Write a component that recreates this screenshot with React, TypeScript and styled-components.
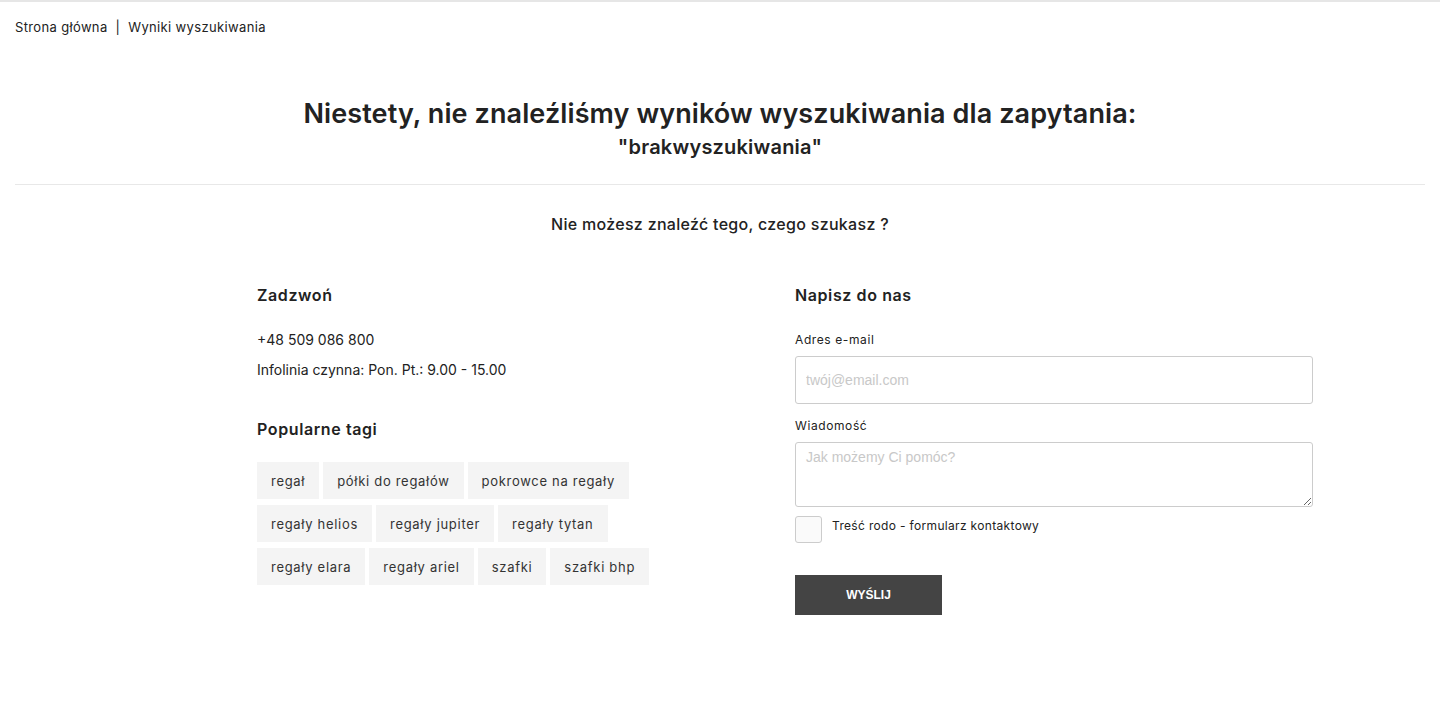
import styled, { createGlobalStyle } from "styled-components";

const GlobalStyle = createGlobalStyle`
  html, body {
    margin: 0;
    padding: 0;
    background: #fff;
  }
  body {
    font-family: Inter, "Noto Sans", sans-serif;
    color: #222;
  }
  * {
    box-sizing: border-box;
  }
`;

const tagRows = [
  ["regał", "półki do regałów", "pokrowce na regały"],
  ["regały helios", "regały jupiter", "regały tytan"],
  ["regały elara", "regały ariel", "szafki", "szafki bhp"],
];

function App() {
  return (
    <Page>
      <GlobalStyle />
      <Breadcrumbs>
        <a href="#">Strona główna</a>
        <Sep>|</Sep>
        <span>Wyniki wyszukiwania</span>
      </Breadcrumbs>

      <Hero>
        <Title>Niestety, nie znaleźliśmy wyników wyszukiwania dla zapytania:</Title>
        <Query>"brakwyszukiwania"</Query>
      </Hero>

      <Lead>Nie możesz znaleźć tego, czego szukasz ?</Lead>

      <Columns>
        <Column>
          <H3>Zadzwoń</H3>
          <InfoLine>+48 509 086 800</InfoLine>
          <InfoLine>Infolinia czynna: Pon. Pt.: 9.00 - 15.00</InfoLine>

          <H3 $top={32} $bottom={21}>
            Popularne tagi
          </H3>
          <Tags>
            {tagRows.map((row, i) => (
              <TagRow key={i}>
                {row.map((t) => (
                  <Tag key={t} href="#">
                    {t}
                  </Tag>
                ))}
              </TagRow>
            ))}
          </Tags>
        </Column>

        <Column>
          <H3>Napisz do nas</H3>
          <Form onSubmit={(e) => e.preventDefault()}>
            <Label>Adres e-mail</Label>
            <Input type="email" placeholder="twój@email.com" />
            <Label>Wiadomość</Label>
            <Textarea placeholder="Jak możemy Ci pomóc?" />
            <Consent>
              <Check type="checkbox" />
              <span>Treść rodo - formularz kontaktowy</span>
            </Consent>
            <Button type="submit">WYŚLIJ</Button>
          </Form>
        </Column>
      </Columns>
    </Page>
  );
}

const Page = styled.div`
  border-top: 2px solid #e6e6e6;
  padding: 0 15px 60px;
`;

const Breadcrumbs = styled.nav`
  display: flex;
  align-items: center;
  height: 50px;
  font-size: 13px;
  letter-spacing: 0.35px;
  color: #222;

  a {
    color: #222;
    text-decoration: none;
  }
`;

const Sep = styled.span`
  margin: 0 8px;
`;

const Hero = styled.div`
  text-align: center;
  padding: 43px 0 22px;
  border-bottom: 1px solid #e8e8e8;
`;

const Title = styled.h1`
  margin: 0;
  font-size: 27px;
  font-weight: 600;
  line-height: 38px;
  letter-spacing: 0.1px;
  color: #222;
`;

const Query = styled.div`
  margin-top: -1px;
  font-size: 20px;
  font-weight: 600;
  line-height: 30px;
  letter-spacing: 0.2px;
  color: #222;
`;

const Lead = styled.p`
  margin: 29px 0 0;
  text-align: center;
  font-size: 16px;
  font-weight: 500;
  letter-spacing: 0.3px;
  color: #222;
`;

const Columns = styled.div`
  display: grid;
  grid-template-columns: 538px 538px;
  padding-left: 242px;
  margin-top: 49px;
`;

const Column = styled.div`
  display: flex;
  flex-direction: column;
  align-items: flex-start;
`;

const H3 = styled.h3<{ $top?: number; $bottom?: number }>`
  margin: ${(p) => p.$top ?? 0}px 0 ${(p) => p.$bottom ?? 18}px;
  font-size: 16px;
  font-weight: 600;
  line-height: 24px;
  letter-spacing: 0.6px;
  color: #222;
`;

const InfoLine = styled.div`
  font-size: 14px;
  line-height: 30px;
  color: #222;
`;

const Tags = styled.div`
  display: flex;
  flex-direction: column;
  gap: 6px;
`;

const TagRow = styled.div`
  display: flex;
  gap: 4px;
`;

const Tag = styled.a`
  display: inline-flex;
  align-items: center;
  height: 37px;
  padding: 0 14px;
  background: #f4f4f4;
  font-size: 13px;
  letter-spacing: 0.7px;
  color: #333;
  text-decoration: none;
`;

const Form = styled.form`
  display: flex;
  flex-direction: column;
  width: 518px;
  padding-top: 6px;
`;

const Label = styled.label`
  font-size: 12px;
  line-height: 18px;
  letter-spacing: 0.6px;
  color: #222;
  margin-bottom: 7px;
`;

const fieldBase = `
  width: 100%;
  border: 1px solid #ccc;
  border-radius: 3px;
  padding: 0 10px;
  font-family: "Liberation Sans", Arial, sans-serif;
  font-size: 14px;
  color: #222;
  background: #fff;
  outline: none;
  &::placeholder {
    color: #c8c8c8;
  }
`;

const Input = styled.input`
  ${fieldBase}
  height: 48px;
  margin-bottom: 13px;
`;

const Textarea = styled.textarea`
  ${fieldBase}
  height: 65px;
  padding-top: 6px;
  resize: vertical;
  display: block;
`;

const Consent = styled.label`
  display: flex;
  align-items: flex-start;
  gap: 10px;
  margin-top: 9px;
  font-size: 12px;
  line-height: 20px;
  letter-spacing: 0.33px;
  color: #222;
`;

const Check = styled.input`
  appearance: none;
  width: 27px;
  height: 27px;
  margin: 0;
  border: 1px solid #ccc;
  border-radius: 3px;
  background: #fafafa;
  flex-shrink: 0;
`;

const Button = styled.button`
  margin-top: 32px;
  width: 147px;
  height: 40px;
  border: 0;
  background: #444;
  color: #fff;
  font-family: "Liberation Sans", Arial, sans-serif;
  font-size: 12px;
  font-weight: 700;
  cursor: pointer;
`;

export default App;
